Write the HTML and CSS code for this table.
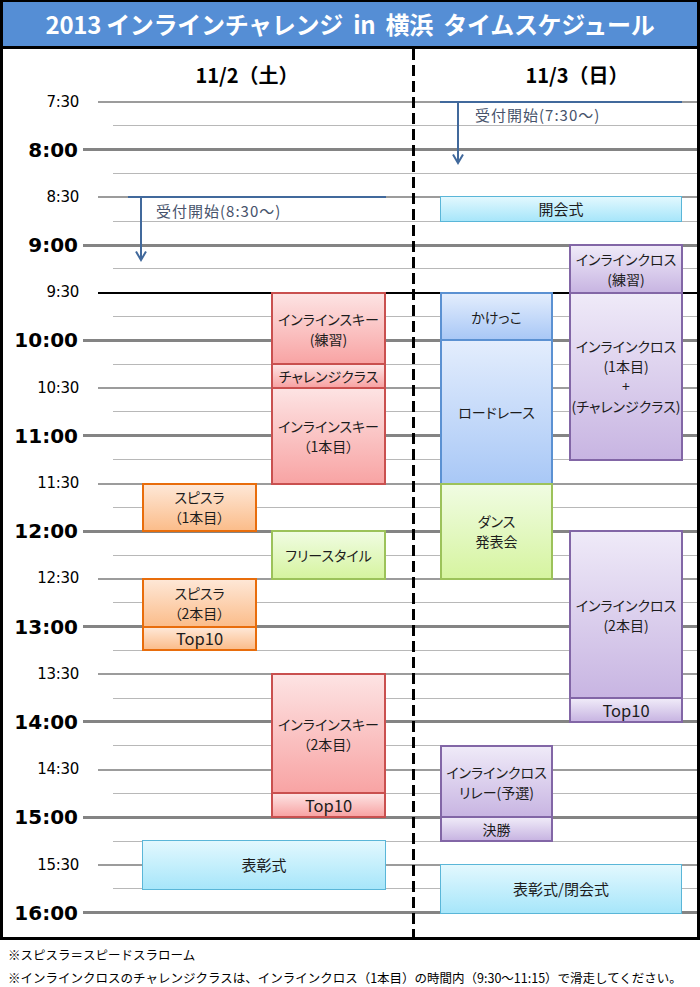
FILE: index.html
```html
<!DOCTYPE html>
<html lang="ja">
<head>
<meta charset="utf-8">
<title>2013 インラインチャレンジ in 横浜 タイムスケジュール</title>
<link rel="stylesheet" href="styles.css">
</head>
<body>
<div class="sheet">
  <h1 class="title">2013 インラインチャレンジ&nbsp; in&nbsp; 横浜&nbsp; タイムスケジュール</h1>
  <div class="board">
    <div class="day day1">11/2（土）</div>
    <div class="day day2">11/3（日）</div>

    <div class="ticks">
      <div class="tick half"><span class="lbl">7:30</span><i class="rule"></i></div>
      <div class="tick qtr"><span class="lbl"></span><i class="rule"></i></div>
      <div class="tick hour"><span class="lbl">8:00</span><i class="rule"></i></div>
      <div class="tick qtr"><span class="lbl"></span><i class="rule"></i></div>
      <div class="tick half"><span class="lbl">8:30</span><i class="rule"></i></div>
      <div class="tick qtr"><span class="lbl"></span><i class="rule"></i></div>
      <div class="tick hour"><span class="lbl">9:00</span><i class="rule"></i></div>
      <div class="tick qtr"><span class="lbl"></span><i class="rule"></i></div>
      <div class="tick half dark"><span class="lbl">9:30</span><i class="rule"></i></div>
      <div class="tick qtr"><span class="lbl"></span><i class="rule"></i></div>
      <div class="tick hour"><span class="lbl">10:00</span><i class="rule"></i></div>
      <div class="tick qtr"><span class="lbl"></span><i class="rule"></i></div>
      <div class="tick half"><span class="lbl">10:30</span><i class="rule"></i></div>
      <div class="tick qtr"><span class="lbl"></span><i class="rule"></i></div>
      <div class="tick hour"><span class="lbl">11:00</span><i class="rule"></i></div>
      <div class="tick qtr"><span class="lbl"></span><i class="rule"></i></div>
      <div class="tick half"><span class="lbl">11:30</span><i class="rule"></i></div>
      <div class="tick qtr"><span class="lbl"></span><i class="rule"></i></div>
      <div class="tick hour"><span class="lbl">12:00</span><i class="rule"></i></div>
      <div class="tick qtr"><span class="lbl"></span><i class="rule"></i></div>
      <div class="tick half"><span class="lbl">12:30</span><i class="rule"></i></div>
      <div class="tick qtr"><span class="lbl"></span><i class="rule"></i></div>
      <div class="tick hour"><span class="lbl">13:00</span><i class="rule"></i></div>
      <div class="tick qtr"><span class="lbl"></span><i class="rule"></i></div>
      <div class="tick half"><span class="lbl">13:30</span><i class="rule"></i></div>
      <div class="tick qtr"><span class="lbl"></span><i class="rule"></i></div>
      <div class="tick hour"><span class="lbl">14:00</span><i class="rule"></i></div>
      <div class="tick qtr"><span class="lbl"></span><i class="rule"></i></div>
      <div class="tick half"><span class="lbl">14:30</span><i class="rule"></i></div>
      <div class="tick qtr"><span class="lbl"></span><i class="rule"></i></div>
      <div class="tick hour"><span class="lbl">15:00</span><i class="rule"></i></div>
      <div class="tick qtr"><span class="lbl"></span><i class="rule"></i></div>
      <div class="tick half"><span class="lbl">15:30</span><i class="rule"></i></div>
      <div class="tick qtr"><span class="lbl"></span><i class="rule"></i></div>
      <div class="tick hour"><span class="lbl">16:00</span><i class="rule"></i></div>
    </div>

    <div class="divider"></div>

    <div class="reception rcp1">
      <svg class="arrow" width="12" height="64" viewBox="0 0 12 64"><path d="M6 0V62M1 53.5L6 62L11 53.5" fill="none" stroke="#41699c" stroke-width="2"/></svg>
      <span class="rcp-text">受付開始(8:30～)</span>
    </div>
    <div class="reception rcp2">
      <svg class="arrow" width="12" height="62" viewBox="0 0 12 62"><path d="M6 0V60M1 51.5L6 60L11 51.5" fill="none" stroke="#41699c" stroke-width="2"/></svg>
      <span class="rcp-text">受付開始(7:30～)</span>
    </div>

    <!-- 11/2 -->
    <div class="ev orange colA" style="grid-row:18/20">スピスラ<br>（1本目）</div>
    <div class="ev orange colA" style="grid-row:22/24">スピスラ<br>（2本目）</div>
    <div class="ev orange colA latin" style="grid-row:24/25">Top10</div>
    <div class="ev red colB" style="grid-row:10/13">インラインスキー<br>(練習)</div>
    <div class="ev red colB" style="grid-row:13/14">チャレンジクラス</div>
    <div class="ev red colB" style="grid-row:14/18">インラインスキー<br>（1本目）</div>
    <div class="ev green colB" style="grid-row:20/22">フリースタイル</div>
    <div class="ev red colB" style="grid-row:26/31">インラインスキー<br>（2本目）</div>
    <div class="ev red colB latin" style="grid-row:31/32">Top10</div>
    <div class="ev cyan colAB" style="grid-row:33/35">表彰式</div>

    <!-- 11/3 -->
    <div class="ev cyan colCD" style="grid-row:6/7">開会式</div>
    <div class="ev purple colD" style="grid-row:8/10">インラインクロス<br>(練習)</div>
    <div class="ev blue colC" style="grid-row:10/12">かけっこ</div>
    <div class="ev purple colD" style="grid-row:10/17">インラインクロス<br>(1本目)<br>+<br>(チャレンジクラス)</div>
    <div class="ev blue colC" style="grid-row:12/18">ロードレース</div>
    <div class="ev green colC" style="grid-row:18/22">ダンス<br>発表会</div>
    <div class="ev purple colD" style="grid-row:20/27">インラインクロス<br>(2本目)</div>
    <div class="ev purple colD latin" style="grid-row:27/28">Top10</div>
    <div class="ev purple colC" style="grid-row:29/32">インラインクロス<br>リレー(予選)</div>
    <div class="ev purple colC" style="grid-row:32/33">決勝</div>
    <div class="ev cyan colCD" style="grid-row:34/36">表彰式/閉会式</div>
  </div>
</div>
<div class="notes">
  <p>※スピスラ＝スピードスラローム</p>
  <p>※インラインクロスのチャレンジクラスは、インラインクロス（1本目）の時間内（9:30～11:15）で滑走してください。</p>
</div>
</body>
</html>
```

FILE: styles.css
```css
* { box-sizing: border-box; margin: 0; padding: 0; }

body {
  margin: 0;
  background: #fff;
  color: #000;
  font-family: "Noto Sans CJK JP", "Noto Sans", sans-serif;
}

.sheet {
  width: 700px;
  border: 3px solid #000;
  border-top-width: 2px;
}

.title {
  height: 47px;
  background: #558ed5;
  border-bottom: 3px solid #000;
  color: #fff;
  font-size: 24px;
  font-weight: bold;
  line-height: 44px;
  text-align: center;
  white-space: nowrap;
  letter-spacing: -0.3px;
}

.board {
  display: grid;
  grid-template-columns:
    [lbl] 80px [rcpt] 45px [r1] 14px [a] 115px [a-end] 14px [b] 115px [b-end]
    26px [dash] 3px [dash-end] 25px [c] 113px [c-end] 16px [d] 114px [d-end] 14px [end];
  grid-template-rows: 53px repeat(35, 23.85px);
}

.day {
  grid-row: 1;
  align-self: center;
  font-size: 20px;
  font-weight: bold;
  text-align: center;
  margin-top: -2px;
}
.day1 { grid-column: rcpt / dash; padding-right: 4px; }
.day2 { grid-column: c / end; padding-left: 17px; }

/* time ticks */
.ticks {
  grid-column: lbl / end;
  grid-row: 2 / -1;
  align-self: start;
  margin-top: -11.925px;
  display: flex;
  flex-direction: column;
}
.tick {
  height: 23.85px;
  display: flex;
  align-items: center;
}
.lbl {
  width: 80px;
  flex: none;
  text-align: right;
  padding-right: 4px;
  font-family: "DejaVu Sans", sans-serif;
  font-size: 15px;
  line-height: 1;
  letter-spacing: -0.3px;
}
.rule {
  flex: 1;
  height: 1px;
  margin-left: 30px;
  background: #b8b8b8;
}
.tick.half .rule { height: 2px; margin-left: 15px; background: #9c9c9c; }
.tick.hour .rule { height: 3px; margin-left: 0; background: #848484; }
.tick.hour .lbl { font-weight: bold; font-size: 20px; padding-right: 5px; letter-spacing: 0; }
.tick.dark .rule { background: #000; }

/* dashed divider */
.divider {
  grid-column: dash / dash-end;
  grid-row: 1 / -1;
  background: repeating-linear-gradient(to bottom, #000 0 11px, transparent 11px 16px);
}

/* reception notes */
.reception {
  display: flex;
  align-items: flex-start;
  margin-top: -1px;
  border-top: 2px solid #41699c;
  align-self: start;
}
.rcp1 { grid-column: r1 / b-end; grid-row: 6; }
.rcp2 { grid-column: c / d-end; grid-row: 2; margin-right: 1px; }
.arrow { flex: none; display: block; }
.rcp1 .arrow { margin-left: 7px; }
.rcp2 .arrow { margin-left: 12px; }
.rcp-text {
  font-size: 15px;
  line-height: 18px;
  letter-spacing: 1px;
  color: #47536b;
  white-space: nowrap;
}
.rcp1 .rcp-text { margin: 4px 0 0 9px; }
.rcp2 .rcp-text { margin: 3px 0 0 11px; }

/* events */
.ev {
  margin: -1px 0;
  border: 2px solid;
  display: flex;
  flex-direction: column;
  justify-content: center;
  align-items: center;
  text-align: center;
  font-size: 14px;
  line-height: 20px;
  color: #1c1c1c;
  white-space: nowrap;
  font-feature-settings: "palt";
}
.ev.latin { font-size: 16.5px; }
.colA { grid-column: a / a-end; }
.colB { grid-column: b / b-end; }
.colAB { grid-column: a / b-end; }
.colC { grid-column: c / c-end; }
.colD { grid-column: d / d-end; }
.colCD { grid-column: c / d-end; margin-right: 1px; }

.red { border-color: #c9504f; background: linear-gradient(#fde3e3, #f8a4a4); }
.orange { border-color: #e86d0c; background: linear-gradient(#fee7d6, #fbbd8b); }
.green { border-color: #9cc25a; background: linear-gradient(#f0fce2, #d6f4a0); }
.blue { border-color: #5b91d2; background: linear-gradient(#e3edfd, #a9c8f6); }
.purple { border-color: #8266a6; background: linear-gradient(#efeaf8, #c8b5e2); }
.cyan {
  border: 1px solid #5ab6d8;
  background: linear-gradient(#e2f8fe, #a7e6fa);
  font-size: 15px;
}

/* footnotes */
.notes {
  padding: 3px 0 0 8px;
  font-size: 12.5px;
  line-height: 23px;
  white-space: nowrap;
}
```
